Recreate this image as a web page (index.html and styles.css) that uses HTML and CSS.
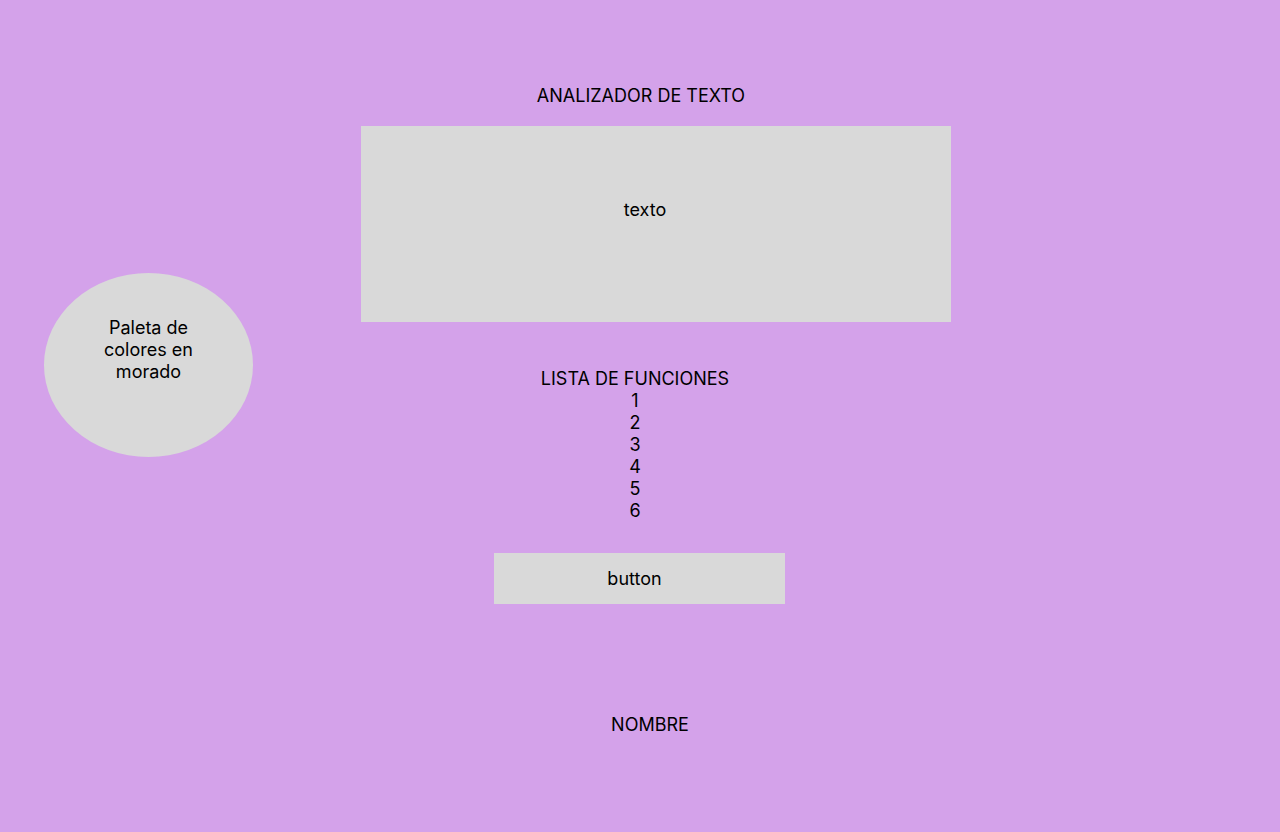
FILE: index.html
```html
<!DOCTYPE html>
<html lang="es">
<head>
<meta charset="utf-8">
<title>Analizador de texto</title>
<link rel="stylesheet" href="styles.css">
</head>
<body>
<div class="page">
  <aside class="side">
    <div class="palette"><p class="palette-text">Paleta de colores en morado</p></div>
  </aside>
  <main class="main">
    <h1 class="title">ANALIZADOR DE TEXTO</h1>
    <div class="textbox"><span>texto</span></div>
    <ul class="functions">
      <li>LISTA DE FUNCIONES</li>
      <li>1</li>
      <li>2</li>
      <li>3</li>
      <li>4</li>
      <li>5</li>
      <li>6</li>
    </ul>
    <button class="btn" type="button">button</button>
    <p class="name">NOMBRE</p>
  </main>
</div>
</body>
</html>
```
FILE: styles.css
```css
html, body {
  margin: 0;
  padding: 0;
}
body {
  background: #D4A2EA;
  color: #000;
  font-family: Inter, "Noto Sans", sans-serif;
  font-size: 18px;
  line-height: 22px;
  height: 832px;
  overflow: hidden;
}
.page {
  display: flex;
  align-items: flex-start;
  padding-left: 44px;
}
.side {
  padding-top: 273px;
  width: 209px;
  flex: none;
}
.palette {
  width: 209px;
  height: 184px;
  border-radius: 50%;
  background: #D9D9D9;
  display: flex;
  justify-content: center;
  align-items: flex-start;
  box-sizing: border-box;
  padding-top: 44px;
}
.palette-text {
  margin: 0;
  width: 100px;
  text-align: center;
}
.main {
  margin-left: 108px;
  display: flex;
  flex-direction: column;
  align-items: flex-start;
}
.title {
  margin: 85px 0 0 0;
  width: 560px;
  text-align: center;
  font-size: 18px;
  font-weight: 400;
  line-height: 22px;
}
.textbox {
  margin-top: 19px;
  width: 590px;
  height: 196px;
  background: #D9D9D9;
  box-sizing: border-box;
  padding: 73px 22px 0 0;
  text-align: center;
}
.functions {
  list-style: none;
  margin: 46px 0 0 0;
  padding: 0;
  width: 548px;
  text-align: center;
}
.btn {
  margin: 31px 0 0 133px;
  width: 291px;
  height: 51px;
  border: none;
  border-radius: 0;
  background: #D9D9D9;
  font: inherit;
  color: #000;
  padding: 0 10px 0 0;
  line-height: 22px;
}
.name {
  margin: 110px 0 0 0;
  width: 578px;
  text-align: center;
}
```
